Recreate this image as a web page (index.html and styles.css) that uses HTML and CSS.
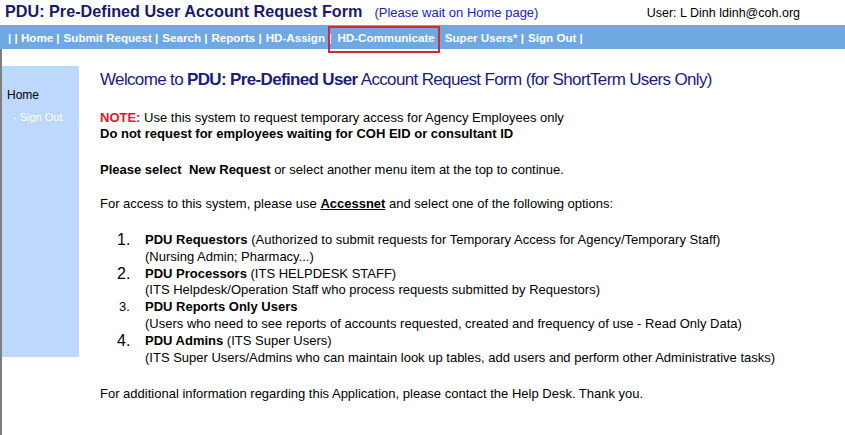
FILE: index.html
```html
<!DOCTYPE html>
<html>
<head>
<meta charset="utf-8">
<title>PDU</title>
<link rel="stylesheet" href="styles.css">
</head>
<body>
<div class="page">
  <header class="top">
    <span class="title">PDU: Pre-Defined User Account Request Form</span>
    <span class="wait">(Please wait on Home page)</span>
    <span class="user">User: L Dinh ldinh@coh.org</span>
  </header>
  <nav class="menu">
    <span>| | Home |</span>
    <span>Submit Request |</span>
    <span>Search |</span>
    <span>Reports |</span>
    <span>HD-Assign |</span>
    <span class="mark">HD-Communicate</span>
    <span>Super Users* |</span>
    <span>Sign Out |</span>
  </nav>
  <div class="body">
    <aside class="side">
      <div class="side-home">Home</div>
      <div class="side-sub">- Sign Out</div>
    </aside>
    <main class="content">
      <h2 class="welcome">Welcome to <b>PDU: Pre-Defined User</b> Account Request Form (for ShortTerm Users Only)</h2>
      <p class="para"><span class="note">NOTE:</span> Use this system to request temporary access for Agency Employees only<br><b>Do not request for employees waiting for COH EID or consultant ID</b></p>
      <p class="para tight"><b>Please select&nbsp; New Request</b> or select another menu item at the top to continue.</p>
      <p class="para"><span>For access to this system, please use <b class="ul">Accessnet</b> and select one of the following options:</span></p>
      <div class="opts">
        <div class="opt">
          <span class="num">1.</span>
          <div class="opt-text"><b>PDU Requestors</b> (Authorized to submit requests for Temporary Access for Agency/Temporary Staff)<br>(Nursing Admin; Pharmacy...)</div>
        </div>
        <div class="opt">
          <span class="num">2.</span>
          <div class="opt-text"><b>PDU Processors</b> (ITS HELPDESK STAFF)<br>(ITS Helpdesk/Operation Staff who process requests submitted by Requestors)</div>
        </div>
        <div class="opt">
          <span class="num small">3.</span>
          <div class="opt-text"><b>PDU Reports Only Users</b><br>(Users who need to see reports of accounts requested, created and frequency of use - Read Only Data)</div>
        </div>
        <div class="opt">
          <span class="num">4.</span>
          <div class="opt-text"><b>PDU Admins</b> (ITS Super Users)<br>(ITS Super Users/Admins who can maintain look up tables, add users and perform other Administrative tasks)</div>
        </div>
      </div>
      <p class="para last">For additional information regarding this Application, please contact the Help Desk. Thank you.</p>
    </main>
  </div>
</div>
</body>
</html>
```
FILE: styles.css
```css
* { box-sizing: border-box; }
html, body { margin: 0; padding: 0; background: #ffffff; }
body { font-family: "Liberation Sans", Arial, sans-serif; color: #000; }
.page { width: 845px; height: 435px; overflow: hidden; }
.top {
  height: 25px;
  display: flex;
  align-items: baseline;
  padding: 2px 45px 0 5px;
}
.title { font-size: 16.2px; font-weight: bold; color: #1a1a6b; }
.wait { font-size: 13px; color: #1a1acc; margin-left: 12px; }
.user { font-size: 12.5px; color: #000; margin-left: auto; }
.menu {
  height: 24px;
  background: #6fa8e2;
  display: flex;
  align-items: center;
  gap: 4px;
  padding-left: 8px;
  color: #ffffff;
  font-size: 11.6px;
  font-weight: bold;
}
.mark { position: relative; margin: 0 6px 0 2px; }
.mark::after {
  content: "";
  position: absolute;
  left: -9px;
  right: -5px;
  top: -5px;
  bottom: -9px;
  border: 2px solid #d42a2f;
}
.body {
  display: flex;
  border-left: 2px solid #7f7f7f;
  padding-top: 17px;
  height: 386px;
}
.side {
  width: 77px;
  height: 291px;
  background: #bdd7fd;
  padding: 22px 0 0 5px;
}
.side-home { font-size: 12px; color: #000; }
.side-sub { font-size: 11px; color: #ffffff; padding: 9px 0 0 6px; }
.content { padding-left: 21px; font-size: 13px; }
.welcome {
  margin: 4px 0 20px;
  font-size: 17px;
  letter-spacing: -0.65px;
  font-weight: normal;
  color: #1b1b80;
}
.welcome b { font-weight: bold; }
.para { margin: 0 0 20px; line-height: 16px; }
.para.tight { margin-bottom: 18px; }
.note { color: #e8141e; font-weight: bold; }
.ul { text-decoration: underline; }
.opts { padding: 0 0 0 17px; margin: 22px 0 20px; }
.para + .opts { margin-top: 3px; }
.opt { display: flex; line-height: 16.8px; }
.num { width: 28px; font-size: 16px; }
.num.small { font-size: 13px; padding-left: 2px; }
.opt-text { font-size: 13px; }
.last { margin: 0; }
```
